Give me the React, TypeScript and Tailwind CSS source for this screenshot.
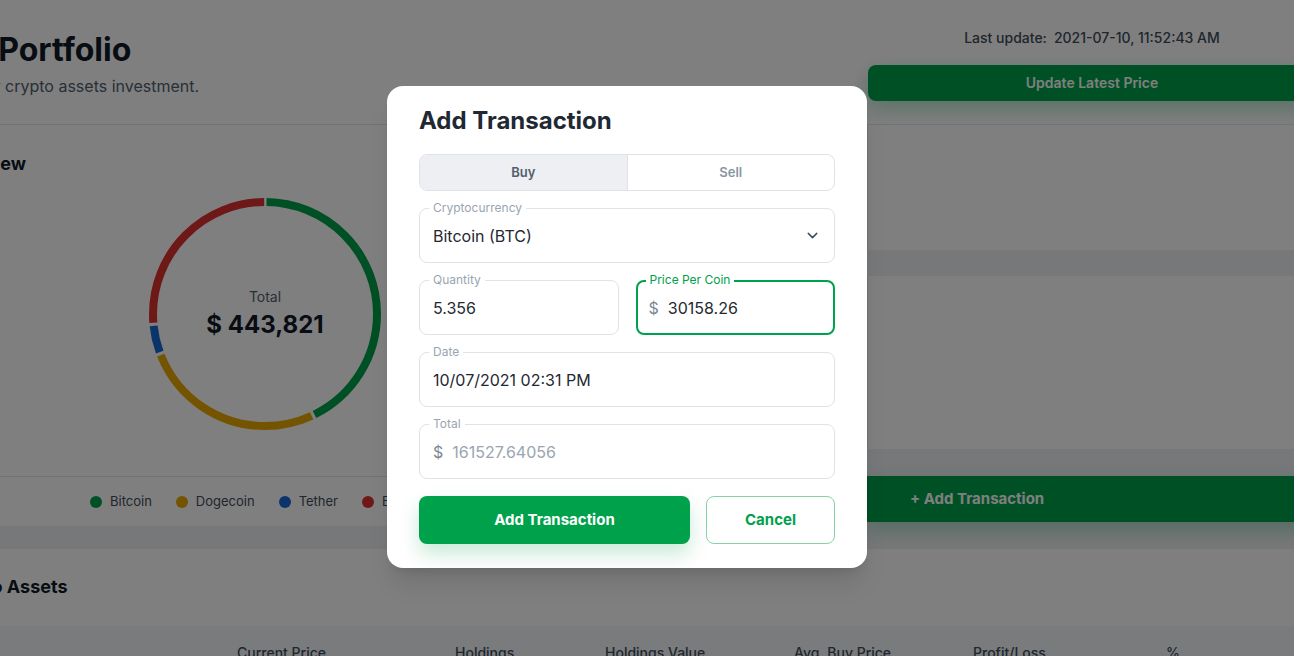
import { ChevronDown } from "lucide-react";
import type { ReactNode } from "react";

type Slice = { name: string; color: string; from: number; to: number };

// angles in degrees, clockwise from 12 o'clock
const slices: Slice[] = [
  { name: "Bitcoin", color: "#00a14b", from: 0.8, to: 153.6 },
  { name: "Dogecoin", color: "#e9a800", from: 155.2, to: 248.2 },
  { name: "Tether", color: "#1769d6", from: 249.8, to: 263.6 },
  { name: "Ethereum", color: "#dc3030", from: 265.2, to: 359.2 },
];

const R = 112;
const C = 2 * Math.PI * R;

function Donut() {
  return (
    <div className="relative h-[240px] w-[240px]">
      <svg width="240" height="240" viewBox="0 0 240 240" className="-rotate-90">
        {slices.map((s) => (
          <circle
            key={s.name}
            cx="120"
            cy="120"
            r={R}
            fill="none"
            stroke={s.color}
            strokeWidth="8"
            strokeDasharray={`${((s.to - s.from) / 360) * C} ${C}`}
            strokeDashoffset={-(s.from / 360) * C}
          />
        ))}
      </svg>
      <div className="absolute inset-0 flex flex-col items-center justify-center">
        <span className="text-sm text-[#52606d]">Total</span>
        <span className="mt-[2px] text-[24px] font-bold leading-8 text-[#111827]">$ 443,821</span>
      </div>
    </div>
  );
}

function Field({
  label,
  focused,
  children,
}: {
  label: string;
  focused?: boolean;
  children: ReactNode;
}) {
  return (
    <div
      className={
        focused
          ? "relative flex h-[55px] items-center rounded-lg border-2 border-[#00a14b] px-[11px]"
          : "relative flex h-[55px] items-center rounded-lg border border-[#dfe3e8] px-[13px]"
      }
    >
      <span
        className={
          focused
            ? "absolute -top-[10px] left-[8px] bg-white px-1 text-xs leading-4 text-[#00a14b]"
            : "absolute -top-[9px] left-[9px] bg-white px-1 text-xs leading-4 text-[#9aa5b1]"
        }
      >
        {label}
      </span>
      {children}
    </div>
  );
}

function Modal() {
  return (
    <div className="absolute inset-0 flex items-center justify-center bg-black/50 pb-[2px] pr-[40px]">
      <div className="w-[480px] rounded-2xl bg-white px-8 pb-6 pt-[19px] shadow-xl">
        <h2 className="text-[24px] font-bold leading-8 text-[#1f2933]">Add Transaction</h2>

        <div className="mt-[17px] flex h-[37px] overflow-hidden rounded-lg border border-[#dfe3e8] text-[13px] font-semibold">
          <div className="flex flex-1 items-center justify-center border-r border-[#dfe3e8] bg-[#edeff2] text-[#52606d]">
            Buy
          </div>
          <div className="flex flex-1 items-center justify-center text-[#8a96a3]">Sell</div>
        </div>

        <div className="mt-[17px] flex flex-col gap-[17px]">
          <Field label="Cryptocurrency">
            <span className="flex-1 text-base text-[#1f2933]">Bitcoin (BTC)</span>
            <ChevronDown size={17} strokeWidth={2} className="text-[#3e4c59]" />
          </Field>

          <div className="grid grid-cols-2 gap-[17px]">
            <Field label="Quantity">
              <span className="text-base text-[#1f2933]">5.356</span>
            </Field>
            <Field label="Price Per Coin" focused>
              <span className="text-base text-[#7b8794]">$</span>
              <span className="ml-[9px] text-base text-[#1f2933]">30158.26</span>
            </Field>
          </div>

          <Field label="Date">
            <span className="text-base text-[#1f2933]">10/07/2021 02:31 PM</span>
          </Field>

          <Field label="Total">
            <span className="text-base text-[#7b8794]">$</span>
            <span className="ml-[9px] text-base text-[#9aa5b1]">161527.64056</span>
          </Field>

          <div className="flex gap-4">
            <button className="h-12 w-[271px] rounded-lg bg-[#00a14b] text-[15px] font-bold text-white shadow-[0_10px_20px_rgba(0,161,75,0.22)]">
              Add Transaction
            </button>
            <button className="h-12 flex-1 rounded-lg border border-[#86d3a8] bg-white text-[15px] font-bold text-[#00a14b]">
              Cancel
            </button>
          </div>
        </div>
      </div>
    </div>
  );
}

const columns = [
  { label: "Coin", w: "w-[319px]" },
  { label: "Current Price", w: "w-[218px]" },
  { label: "Holdings", w: "w-[150px]" },
  { label: "Holdings Value", w: "w-[189px]" },
  { label: "Avg. Buy Price", w: "w-[179px]" },
  { label: "Profit/Loss", w: "w-[193px]" },
  { label: "%", w: "w-[100px]" },
];

export default function App() {
  return (
    <div className="relative h-[656px] w-[1294px] overflow-hidden bg-[#eef0f4] font-['Inter',sans-serif]">
      <div className="-ml-[140px] w-[1456px]">
        <header className="flex h-[125px] justify-between border-b border-[#e4e7eb] bg-white pl-[23px]">
          <div className="pt-[30px]">
            <h1 className="text-[32px] font-bold leading-10 text-[#111827]">Crypto Portfolio</h1>
            <p className="mt-[4px] text-base text-[#52606d]">Monitor all your crypto assets investment.</p>
          </div>
          <div className="w-[448px] pt-[28px]">
            <p className="text-center text-sm font-medium text-[#3e4c59]">
              Last update:<span className="ml-[7px]">2021-07-10, 11:52:43 AM</span>
            </p>
            <button className="mt-[17px] h-9 w-full rounded-lg bg-[#00a14b] text-sm font-semibold text-white shadow-[0_8px_20px_rgba(0,161,75,0.3)]">
              Update Latest Price
            </button>
          </div>
        </header>

        <main className="flex gap-4 pl-[58px]">
          <section className="flex h-[401px] flex-1 flex-col border-r border-[#e4e7eb] bg-white">
            <div className="flex-1 px-6 pt-[25px]">
              <h3 className="text-lg font-bold leading-7 text-[#111827]">Overview</h3>
              <div className="ml-[203px] mt-[16px]">
                <Donut />
              </div>
            </div>
            <div className="flex h-[50px] border-t border-[#e4e7eb]">
              <div className="ml-[172px] flex items-center gap-[24px] text-[13px] text-[#3e4c59]">
                {slices.map((s) => (
                  <span key={s.name} className="flex items-center gap-2">
                    <span className="h-3 w-3 rounded-full" style={{ backgroundColor: s.color }} />
                    {s.name}
                  </span>
                ))}
              </div>
            </div>
          </section>

          <aside className="flex w-[449px] flex-col">
            <div className="h-[125px] border-l border-[#e4e7eb] bg-white" />
            <div className="mt-[26px] h-[173px] border-l border-[#e4e7eb] bg-white" />
            <button className="mt-[27px] h-[46px] bg-[#00a14b] pl-[43px] text-left text-[15px] font-bold text-white shadow-[0_8px_20px_rgba(0,161,75,0.3)]">
              + Add Transaction
            </button>
          </aside>
        </main>

        <section className="mt-[23px] bg-white pl-[58px]">
          <h3 className="px-6 pt-[24px] text-lg font-bold leading-7 text-[#111827]">Crypto Assets</h3>
          <div className="mt-[25px] flex h-12 bg-[#f5f7fa] pt-[17px] text-sm font-medium text-[#3e4c59]">
            {columns.map((c) => (
              <div key={c.label} className={`${c.w} shrink-0`}>
                {c.label}
              </div>
            ))}
          </div>
        </section>
      </div>

      <Modal />
    </div>
  );
}
